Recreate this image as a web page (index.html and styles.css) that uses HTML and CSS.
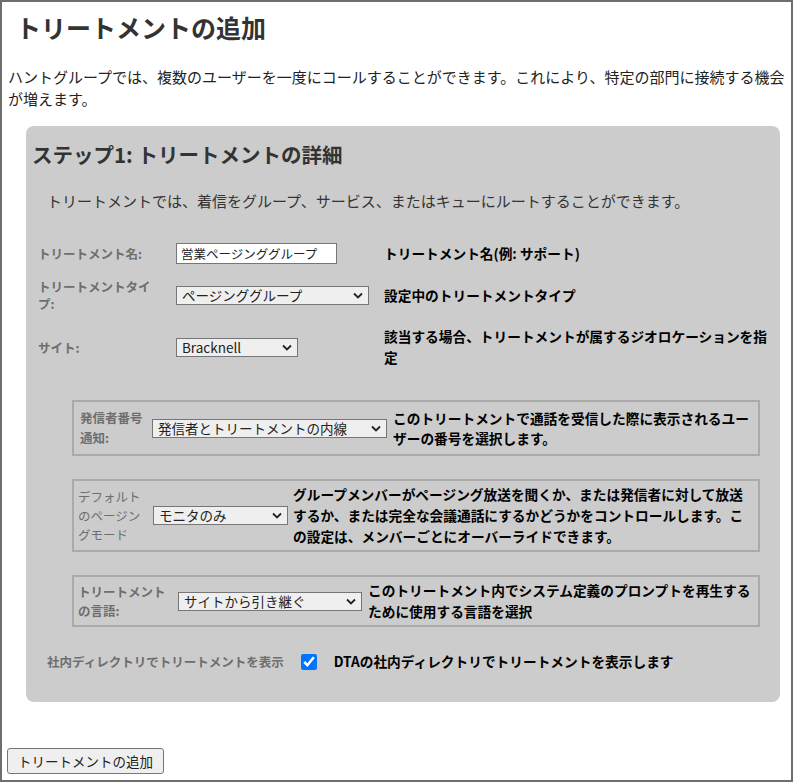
FILE: index.html
```html
<!DOCTYPE html>
<html lang="ja">
<head>
  <meta charset="UTF-8">
  <title>トリートメントの追加</title>
  <link rel="stylesheet" href="styles.css">
</head>
<body>

<div class="page">
  <h1 class="title">トリートメントの追加</h1>
  <p class="intro">ハントグループでは、複数のユーザーを一度にコールすることができます。これにより、特定の部門に接続する機会が増えます。</p>

  <div class="panel">
    <h2 class="step-title">ステップ1: トリートメントの詳細</h2>
    <p class="step-desc">トリートメントでは、着信をグループ、サービス、またはキューにルートすることができます。</p>

    <div class="form-rows">
      <div class="row">
        <label class="label">トリートメント名:</label>
        <div><input class="text-input" type="text" value="営業ページンググループ"></div>
        <div class="help">トリートメント名(例: サポート)</div>
      </div>
      <div class="row">
        <label class="label">トリートメントタイプ:</label>
        <div>
          <span class="select-wrap select-type">
            <select class="select"><option>ページンググループ</option></select>
            <svg class="chevron" viewBox="0 0 10 6"><path d="M1 1l4 4 4-4"/></svg>
          </span>
        </div>
        <div class="help">設定中のトリートメントタイプ</div>
      </div>
      <div class="row">
        <label class="label">サイト:</label>
        <div>
          <span class="select-wrap select-site">
            <select class="select"><option>Bracknell</option></select>
            <svg class="chevron" viewBox="0 0 10 6"><path d="M1 1l4 4 4-4"/></svg>
          </span>
        </div>
        <div class="help">該当する場合、トリートメントが属するジオロケーションを指定</div>
      </div>
    </div>

    <!-- sub options -->
    <div class="option-box box-cli">
      <label class="label">発信者番号通知:</label>
      <span class="select-wrap">
        <select class="select"><option>発信者とトリートメントの内線</option></select>
        <svg class="chevron" viewBox="0 0 10 6"><path d="M1 1l4 4 4-4"/></svg>
      </span>
      <div class="help">このトリートメントで通話を受信した際に表示されるユーザーの番号を選択します。</div>
    </div>

    <div class="option-box box-mode">
      <label class="label">デフォルトのページングモード</label>
      <span class="select-wrap">
        <select class="select"><option>モニタのみ</option></select>
        <svg class="chevron" viewBox="0 0 10 6"><path d="M1 1l4 4 4-4"/></svg>
      </span>
      <div class="help">グループメンバーがページング放送を聞くか、または発信者に対して放送するか、または完全な会議通話にするかどうかをコントロールします。この設定は、メンバーごとにオーバーライドできます。</div>
    </div>

    <div class="option-box box-lang">
      <label class="label">トリートメントの言語:</label>
      <span class="select-wrap">
        <select class="select"><option>サイトから引き継ぐ</option></select>
        <svg class="chevron" viewBox="0 0 10 6"><path d="M1 1l4 4 4-4"/></svg>
      </span>
      <div class="help">このトリートメント内でシステム定義のプロンプトを再生するために使用する言語を選択</div>
    </div>

    <div class="dir-row">
      <label class="label">社内ディレクトリでトリートメントを表示</label>
      <input class="check" type="checkbox" checked>
      <div class="help">DTAの社内ディレクトリでトリートメントを表示します</div>
    </div>
  </div>

  <button class="add-button">トリートメントの追加</button>
</div>

</body>
</html>
```

FILE: styles.css
```css
body {
  margin: 0;
  font-family: "Noto Sans CJK JP", "Liberation Sans", sans-serif;
  color: #222;
}
.page {
  height: 782px;
  box-sizing: border-box;
  border: 2px solid #6e6e6e;
  padding: 0 6px;
  overflow: hidden;
}
.title {
  margin: 8px 0 0 8px;
  font-size: 25px;
  line-height: 34px;
  font-weight: bold;
  color: #333;
}
.intro {
  margin: 22px 0 0;
  font-size: 15px;
  line-height: 22px;
}
.panel {
  margin: 16px 5px 0 18px;
  padding: 15px 7px 30px 7px;
  background-color: #cccccc;
  border-radius: 8px;
}
.step-title {
  margin: 0 0 0 -1px;
  font-size: 20.5px;
  line-height: 26px;
  font-weight: bold;
  color: #333;
}
.step-desc {
  margin: 23px 0 0 14px;
  font-size: 15px;
  line-height: 22px;
  color: #333;
}
.label {
  font-size: 12.5px;
  font-weight: bold;
  color: #6e6e6e;
}
.help {
  font-size: 13.7px;
  line-height: 21px;
  font-weight: bold;
  color: #000;
}
.form-rows {
  display: flex;
  flex-direction: column;
  gap: 8px;
  margin: 28px 0 0 5px;
}
.row {
  display: grid;
  grid-template-columns: 138px 208px 1fr;
  align-items: center;
  padding: 3px 0;
}
.row .label {
  line-height: 17px;
  padding-right: 12px;
}
.text-input {
  display: block;
  width: 161px;
  height: 21px;
  box-sizing: border-box;
  margin: 0;
  padding: 0 4px;
  border: 1px solid #767676;
  background: #fff;
  font-family: inherit;
  font-size: 12.5px;
  color: #222;
}

/* select with drawn chevron */
.select-wrap {
  position: relative;
  display: block;
  flex: none;
  height: 19px;
}
.select {
  display: block;
  width: 100%;
  height: 19px;
  box-sizing: border-box;
  margin: 0;
  padding: 0 20px 0 5px;
  border: 1px solid #767676;
  border-radius: 0;
  background-color: #efefef;
  -webkit-appearance: none;
  appearance: none;
  font-family: inherit;
  font-size: 13.5px;
  line-height: 17px;
  color: #222;
}
.chevron {
  position: absolute;
  right: 6px;
  top: 6px;
  width: 10px;
  height: 7px;
  fill: none;
  stroke: #222;
  stroke-width: 1.8;
  pointer-events: none;
}
.select-type { width: 193px; }
.select-site { width: 122px; }

.option-box {
  display: flex;
  align-items: center;
  margin: 23px 13px 0 39px;
  border: 2px solid #aaaaaa;
  padding: 3px 5px 3px 4px;
}
.option-box .label { flex: none; box-sizing: border-box; }
.box-cli {
  margin-top: 29px;
  padding: 6px 5px 6px 6px;
}
.box-cli .label { width: 72px; line-height: 20px; padding-right: 6px; }
.box-cli .select-wrap { width: 235px; margin-right: 6px; }
.box-cli .help { line-height: 20px; }

.box-mode .label { width: 75px; line-height: 19px; padding-right: 8px; font-weight: normal; }
.box-mode .select-wrap { width: 135px; margin-right: 5px; }

.box-lang .label { width: 100px; line-height: 19px; padding-right: 10px; }
.box-lang .select-wrap { width: 184px; margin-right: 6px; }

.option-box .help { flex: 1; }

.dir-row {
  display: flex;
  align-items: center;
  margin: 24px 0 0 14px;
}
.check {
  width: 16px;
  height: 16px;
  margin: 0 17px;
}
.add-button {
  margin: 46px 0 0 -1px;
  height: 26px;
  padding: 0 10px;
  font-family: inherit;
  font-size: 13.5px;
  color: #222;
  background: #efefef;
  border: 1px solid #767676;
  border-radius: 3px;
}
```
